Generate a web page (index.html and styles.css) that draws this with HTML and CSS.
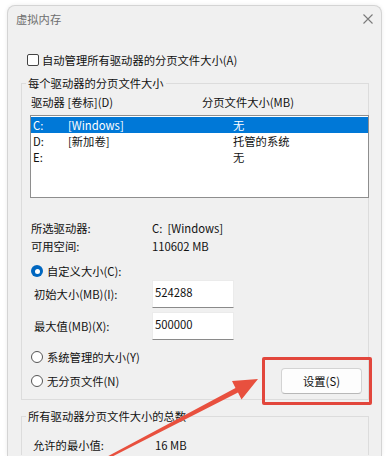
FILE: index.html
```html
<!DOCTYPE html>
<html lang="zh-CN">
<head>
    <meta charset="UTF-8">
    <meta name="viewport" content="width=device-width, initial-scale=1.0">
    <title>虚拟内存</title>
    <link rel="stylesheet" href="styles.css">
</head>
<body>
<div class="window">
    <div class="titlebar">
        <span class="title">虚拟内存</span>
        <svg class="close" width="10" height="10" viewBox="0 0 10 10">
            <path d="M0.5 0.5 L9.5 9.5 M9.5 0.5 L0.5 9.5" stroke="#7a7a7a" stroke-width="1.1" fill="none"/>
        </svg>
    </div>

    <div class="auto">
        <span class="checkbox"></span>
        <span>自动管理所有驱动器的分页文件大小(A)</span>
    </div>

    <fieldset class="group">
        <legend>每个驱动器的分页文件大小</legend>
        <div class="cols">
            <span class="col1">驱动器 [卷标](D)</span>
            <span>分页文件大小(MB)</span>
        </div>
        <div class="list">
            <div class="row sel"><span class="drv">C:</span><span class="lbl">[Windows]</span><span>无</span></div>
            <div class="row"><span class="drv">D:</span><span class="lbl">[新加卷]</span><span>托管的系统</span></div>
            <div class="row"><span class="drv">E:</span><span class="lbl"></span><span>无</span></div>
        </div>

        <div class="info">
            <div class="info-row"><span class="key">所选驱动器:</span><span>C:&nbsp;&nbsp;[Windows]</span></div>
            <div class="info-row"><span class="key">可用空间:</span><span>110602 MB</span></div>
        </div>

        <div class="radio-row custom">
            <span class="radio on"></span>
            <span>自定义大小(C):</span>
        </div>
        <div class="field">
            <span class="field-label">初始大小(MB)(I):</span>
            <div class="input">524288</div>
        </div>
        <div class="field">
            <span class="field-label">最大值(MB)(X):</span>
            <div class="input">500000</div>
        </div>

        <div class="lower">
            <div class="radios">
                <div class="radio-row"><span class="radio"></span><span>系统管理的大小(Y)</span></div>
                <div class="radio-row"><span class="radio"></span><span>无分页文件(N)</span></div>
            </div>
            <div class="btn">设置(S)</div>
        </div>
    </fieldset>

    <fieldset class="group total">
        <legend>所有驱动器分页文件大小的总数</legend>
        <div class="info-row"><span class="key2">允许的最小值:</span><span>16 MB</span></div>
    </fieldset>
</div>

<!-- 标注 -->
<div class="mark"></div>
<svg class="arrow" width="389" height="456" viewBox="0 0 389 456">
    <polygon fill="#e8503e" points="258,379 232,381 235.5,388 105.5,457.5 106.5,459.5 238,392.5 241.5,399.5"/>
</svg>
</body>
</html>
```

FILE: styles.css
```css
* {
    box-sizing: border-box;
}
body {
    margin: 0;
    width: 389px;
    height: 456px;
    overflow: hidden;
    position: relative;
    background: #fff;
    font-family: "Noto Sans CJK SC", sans-serif;
    font-size: 11.3px;
    color: #111;
}
.window {
    margin: 5px 0 0 7px;
    width: 375px;
    height: 451px;
    background: #f0f0f0;
    border: 1px solid #d4d4d4;
    border-bottom: none;
    border-radius: 8px 8px 0 0;
    box-shadow: 0 0 4px rgba(0, 0, 0, .08);
}
.titlebar {
    height: 26px;
    display: flex;
    align-items: center;
    justify-content: space-between;
    padding: 0 8px;
}
.title {
    color: #6e6e6e;
    line-height: 26px;
}
.close {
    display: block;
}
.auto {
    margin: 20px 0 0 19px;
    display: flex;
    align-items: center;
    gap: 3px;
    height: 16px;
    line-height: 16px;
}
.checkbox {
    width: 12px;
    height: 12px;
    border: 1px solid #444;
    border-radius: 2px;
    background: #fff;
}

/* 分组框 */
.group {
    margin: 7px 0 0 13px;
    width: 348px;
    min-width: 0;
    border: 1px solid #dcdcdc;
    padding: 3px 0 5px 8px;
}
.group legend {
    padding: 0 2px;
    margin-left: -4px;
    line-height: 16px;
}
.cols {
    display: flex;
    padding-left: 1px;
    line-height: 16px;
}
.col1 {
    width: 171px;
}
.list {
    margin-top: 5px;
    width: 339px;
    height: 83px;
    background: #fff;
    border: 1px solid #8e8e8e;
    padding-top: 1px;
}
.row {
    display: flex;
    height: 16px;
    line-height: 16px;
    padding-left: 2px;
}
.row .drv {
    width: 35px;
}
.row .lbl {
    width: 165px;
}
.row.sel {
    background: #0078d7;
    color: #fff;
}
.info {
    margin-top: 21px;
    padding-left: 1px;
}
.info-row {
    display: flex;
    line-height: 18px;
}
.key {
    width: 121px;
}

/* 单选 */
.radio-row {
    display: flex;
    align-items: center;
    gap: 4px;
    height: 16px;
    line-height: 16px;
    padding-left: 1px;
}
.radio {
    width: 12px;
    height: 12px;
    border-radius: 50%;
    border: 1px solid #555;
    background: #fff;
}
.radio.on {
    border: none;
    background: #0067c0;
    display: flex;
    align-items: center;
    justify-content: center;
}
.radio.on::after {
    content: "";
    width: 5px;
    height: 5px;
    border-radius: 50%;
    background: #fff;
}
.custom {
    margin-top: 8px;
}
.field {
    display: flex;
    align-items: center;
    padding-left: 4px;
    margin-top: 1px;
}
.field + .field {
    margin-top: 4px;
}
.field-label {
    width: 118px;
}
.input {
    width: 82px;
    height: 28px;
    background: #fff;
    border: 1px solid #ebebeb;
    border-bottom-color: #8a8a8a;
    padding: 3px 0 0 2px;
    line-height: 16px;
}
.lower {
    display: flex;
    justify-content: space-between;
    align-items: flex-end;
    margin-top: 9px;
    padding-right: 6px;
}
.radios {
    display: flex;
    flex-direction: column;
    gap: 8px;
    margin-bottom: 5px;
}
.btn {
    width: 81px;
    height: 26px;
    background: #fdfdfd;
    border: 1px solid #d3d3d3;
    border-bottom-color: #b8b8b8;
    border-radius: 4px;
    display: flex;
    align-items: center;
    justify-content: center;
}
.total {
    margin-top: 8px;
    padding: 12px 0 0 11px;
    height: 47px;
    border-bottom: none;
}
.total legend {
    margin-left: -7px;
}
.key2 {
    width: 122px;
}

/* 红色标注 */
.mark {
    position: absolute;
    left: 262px;
    top: 357px;
    width: 110px;
    height: 48px;
    border: 3px solid #e2463c;
    border-radius: 2px;
}
.arrow {
    position: absolute;
    left: 0;
    top: 0;
    pointer-events: none;
}
```
